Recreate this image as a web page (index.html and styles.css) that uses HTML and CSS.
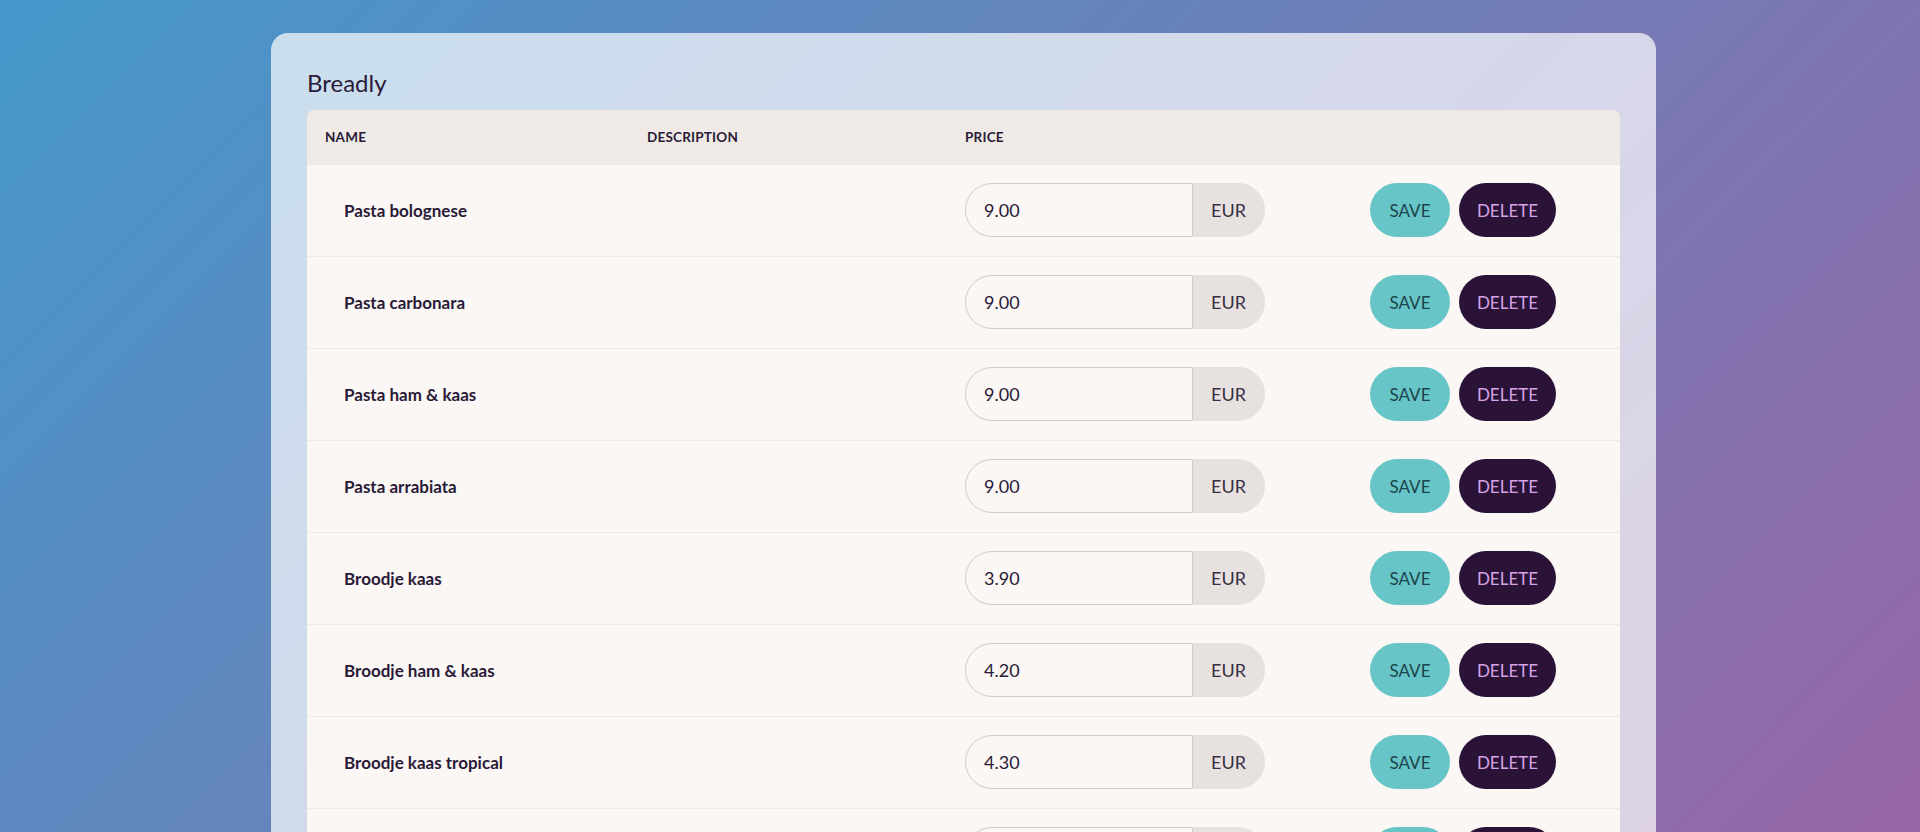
FILE: index.html
```html
<!DOCTYPE html>
<html lang="nl">
<head>
<meta charset="utf-8">
<title>Breadly</title>
<link rel="stylesheet" href="styles.css">
</head>
<body>
<div class="app">
  <main class="card">
    <h1 class="title">Breadly</h1>
    <div class="table">
      <div class="thead">
        <div class="th">Name</div>
        <div class="th">Description</div>
        <div class="th">Price</div>
        <div class="th"></div>
      </div>
      <div class="row">
        <div class="name">Pasta bolognese</div>
        <div class="desc"></div>
        <div class="price"><input class="price-input" value="9.00"><span class="addon">EUR</span></div>
        <div class="actions"><button class="btn save">SAVE</button><button class="btn delete">DELETE</button></div>
      </div>
      <div class="row">
        <div class="name">Pasta carbonara</div>
        <div class="desc"></div>
        <div class="price"><input class="price-input" value="9.00"><span class="addon">EUR</span></div>
        <div class="actions"><button class="btn save">SAVE</button><button class="btn delete">DELETE</button></div>
      </div>
      <div class="row">
        <div class="name">Pasta ham &amp; kaas</div>
        <div class="desc"></div>
        <div class="price"><input class="price-input" value="9.00"><span class="addon">EUR</span></div>
        <div class="actions"><button class="btn save">SAVE</button><button class="btn delete">DELETE</button></div>
      </div>
      <div class="row">
        <div class="name">Pasta arrabiata</div>
        <div class="desc"></div>
        <div class="price"><input class="price-input" value="9.00"><span class="addon">EUR</span></div>
        <div class="actions"><button class="btn save">SAVE</button><button class="btn delete">DELETE</button></div>
      </div>
      <div class="row">
        <div class="name">Broodje kaas</div>
        <div class="desc"></div>
        <div class="price"><input class="price-input" value="3.90"><span class="addon">EUR</span></div>
        <div class="actions"><button class="btn save">SAVE</button><button class="btn delete">DELETE</button></div>
      </div>
      <div class="row">
        <div class="name">Broodje ham &amp; kaas</div>
        <div class="desc"></div>
        <div class="price"><input class="price-input" value="4.20"><span class="addon">EUR</span></div>
        <div class="actions"><button class="btn save">SAVE</button><button class="btn delete">DELETE</button></div>
      </div>
      <div class="row">
        <div class="name">Broodje kaas tropical</div>
        <div class="desc"></div>
        <div class="price"><input class="price-input" value="4.30"><span class="addon">EUR</span></div>
        <div class="actions"><button class="btn save">SAVE</button><button class="btn delete">DELETE</button></div>
      </div>
      <div class="row">
        <div class="name">Broodje gezond</div>
        <div class="desc"></div>
        <div class="price"><input class="price-input" value="4.50"><span class="addon">EUR</span></div>
        <div class="actions"><button class="btn save">SAVE</button><button class="btn delete">DELETE</button></div>
      </div>
    </div>
  </main>
</div>
</body>
</html>
```

FILE: styles.css
```css
* { box-sizing: border-box; }

html, body {
  margin: 0;
  padding: 0;
}

body {
  font-family: Lato, "Noto Sans", sans-serif;
  color: #2a1a38;
}

.app {
  height: 100vh;
  overflow: hidden;
  background: linear-gradient(135deg, #4498cb 0%, #9766a6 100%);
  padding: 33px 0 0 271px;
}

.card {
  width: 1385px;
  min-height: 900px;
  background: rgba(255, 255, 255, 0.7);
  border-radius: 17px;
  padding: 36px 36px;
}

.title {
  margin: 0 0 12px;
  font-size: 24px;
  font-weight: 400;
  line-height: 1.2;
  color: #2a1a38;
}

.table {
  border-radius: 8px;
  overflow: hidden;
  background: #faf7f4;
}

.thead, .row {
  display: grid;
  grid-template-columns: 322px 318px 405px 1fr;
  align-items: center;
}

.thead {
  height: 55px;
  background: #efeae6;
}

.th {
  padding: 0 18px;
  font-size: 13.5px;
  font-weight: 700;
  text-transform: uppercase;
  letter-spacing: 0.2px;
}

.row {
  height: 92px;
  border-bottom: 1px solid #efeae7;
}

.name {
  padding-left: 37px;
  font-size: 17px;
  font-weight: 700;
}

.price {
  padding-left: 18px;
  display: flex;
}

.price-input {
  width: 228px;
  height: 54px;
  border: 1px solid #d2cbce;
  border-radius: 27px 0 0 27px;
  background: #faf7f4;
  padding: 0 0 0 18px;
  font-family: inherit;
  font-size: 18px;
  color: #2a1a38;
  outline: none;
}

.addon {
  width: 72px;
  height: 54px;
  display: flex;
  align-items: center;
  justify-content: center;
  padding-right: 1px;
  background: #e7e2df;
  border-radius: 0 27px 27px 0;
  font-size: 18px;
  color: #3a2f42;
}

.actions {
  padding-left: 18px;
  display: flex;
  gap: 9px;
}

.btn {
  height: 54px;
  border: none;
  border-radius: 27px;
  padding: 0;
  font-family: inherit;
  font-size: 17px;
  cursor: pointer;
}

.save {
  width: 80px;
  background: #67c4c7;
  color: #1b454c;
}

.delete {
  width: 97px;
  background: #2a1336;
  color: #d6a3e8;
}
```
